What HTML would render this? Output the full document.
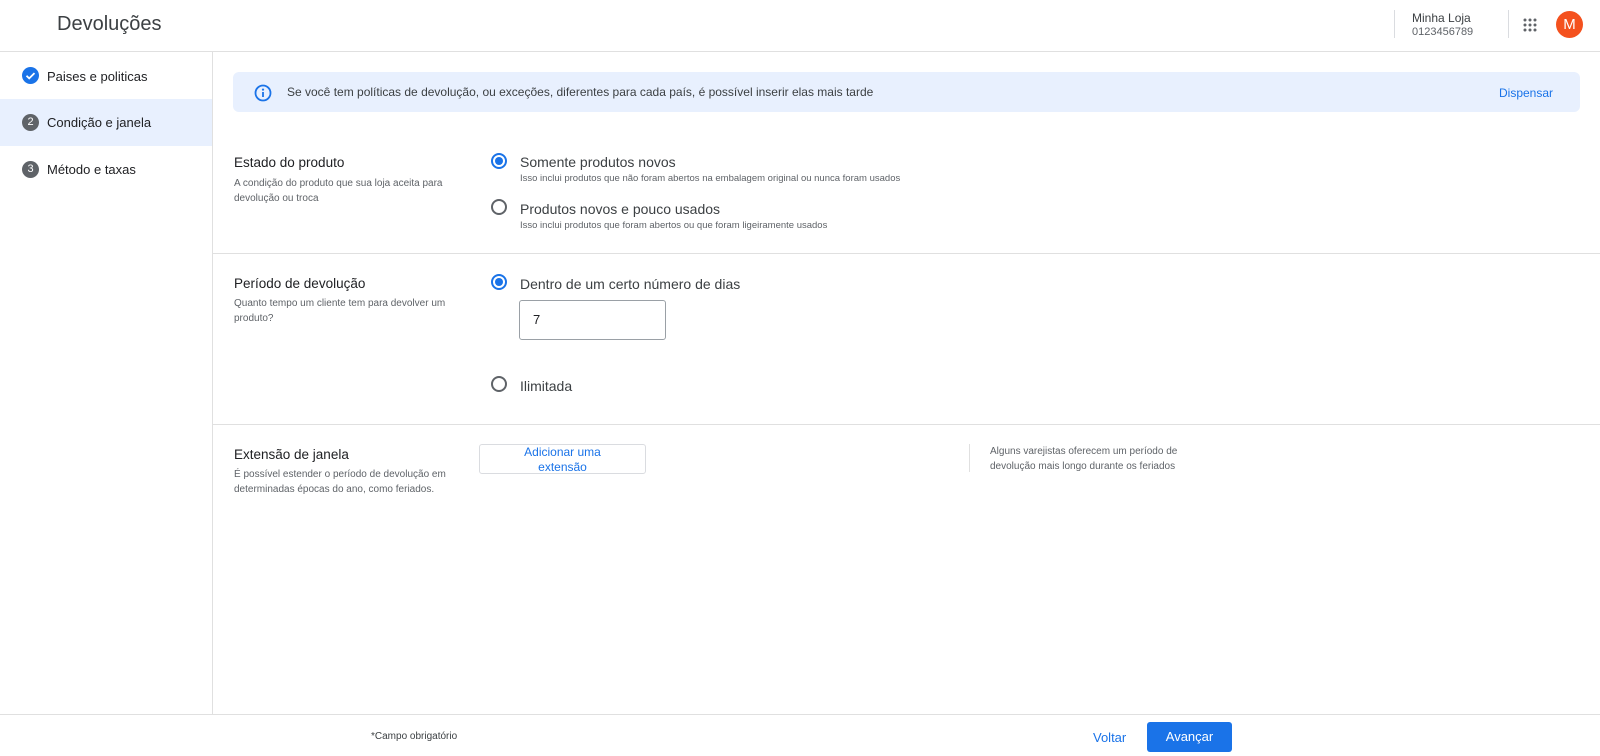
<!DOCTYPE html><html><head><meta charset="utf-8"><style>
*{box-sizing:border-box;margin:0;padding:0}
body{width:1600px;height:756px;position:relative;font-family:"Liberation Sans",sans-serif;color:#202124;background:#fff;overflow:hidden}
.a{position:absolute}
.h{font-size:14px;color:#202124}
.s{font-size:10px;color:#5f6368;line-height:15px}
.radio{position:absolute;width:16px;height:16px;border:2px solid #5f6368;border-radius:50%}
.radio.on{border-color:#1a73e8}
.radio.on::after{content:"";position:absolute;left:2px;top:2px;width:8px;height:8px;border-radius:50%;background:#1a73e8}
</style></head><body>
<div class="a" style="left:57px;top:13px;font-size:20px;color:#3c4043">Devoluções</div>
<div class="a" style="left:1394px;top:10px;width:1px;height:28px;background:#dadce0"></div>
<div class="a" style="left:1412px;top:11px;font-size:12px;color:#3c4043">Minha Loja</div>
<div class="a" style="left:1412px;top:26px;font-size:11px;color:#5f6368">0123456789</div>
<div class="a" style="left:1508px;top:10px;width:1px;height:28px;background:#dadce0"></div>
<svg class="a" style="left:1523px;top:18px" width="14" height="14"><g fill="#5f6368"><circle cx="2" cy="2" r="1.5"/><circle cx="7" cy="2" r="1.5"/><circle cx="12" cy="2" r="1.5"/><circle cx="2" cy="7" r="1.5"/><circle cx="7" cy="7" r="1.5"/><circle cx="12" cy="7" r="1.5"/><circle cx="2" cy="12" r="1.5"/><circle cx="7" cy="12" r="1.5"/><circle cx="12" cy="12" r="1.5"/></g></svg>
<div class="a" style="left:1556px;top:11px;width:27px;height:27px;border-radius:50%;background:#f4511e;color:#fff;font-size:15px;text-align:center;line-height:27px">M</div>
<div class="a" style="left:0;top:51px;width:1600px;height:1px;background:#e0e0e0"></div>
<div class="a" style="left:212px;top:52px;width:1px;height:662px;background:#e0e0e0"></div>
<div class="a" style="left:0;top:99px;width:212px;height:47px;background:#e8f0fe"></div>
<svg class="a" style="left:22px;top:67px" width="17" height="17"><circle cx="8.5" cy="8.5" r="8.5" fill="#1a73e8"/><path d="M4.5 8.7l2.7 2.7 5.3-5.3" stroke="#fff" stroke-width="1.8" fill="none"/></svg>
<div class="a" style="left:47px;top:69px;font-size:13px">Paises e politicas</div>
<div class="a" style="left:22px;top:114px;width:17px;height:17px;border-radius:50%;background:#5f6368;color:#fff;font-size:11px;text-align:center;line-height:17px">2</div>
<div class="a" style="left:47px;top:115px;font-size:13px">Condição e janela</div>
<div class="a" style="left:22px;top:161px;width:17px;height:17px;border-radius:50%;background:#5f6368;color:#fff;font-size:11px;text-align:center;line-height:17px">3</div>
<div class="a" style="left:47px;top:162px;font-size:13px">Método e taxas</div>
<div class="a" style="left:233px;top:72px;width:1347px;height:40px;background:#e8f0fe;border-radius:6px"></div>
<svg class="a" style="left:254px;top:84px" width="18" height="18"><circle cx="9" cy="9" r="7.5" stroke="#1a73e8" stroke-width="1.8" fill="none"/><rect x="8.1" y="8" width="1.8" height="5" fill="#1a73e8"/><circle cx="9" cy="5.6" r="1.1" fill="#1a73e8"/></svg>
<div class="a" style="left:287px;top:85px;font-size:12px;color:#3c4043">Se você tem políticas de devolução, ou exceções, diferentes para cada país, é possível inserir elas mais tarde</div>
<div class="a" style="left:1499px;top:86px;font-size:12px;color:#1a73e8">Dispensar</div>
<div class="a h" style="left:234px;top:155px;font-size:13.5px">Estado do produto</div>
<div class="a s" style="left:234px;top:176px">A condição do produto que sua loja aceita para<br>devolução ou troca</div>
<div class="radio on" style="left:491px;top:153px"></div>
<div class="a h" style="left:520px;top:154px;color:#3c4043">Somente produtos novos</div>
<div class="a s" style="left:520px;top:171px;font-size:9.5px">Isso inclui produtos que não foram abertos na embalagem original ou nunca foram usados</div>
<div class="radio" style="left:491px;top:199px"></div>
<div class="a h" style="left:520px;top:201px;color:#3c4043">Produtos novos e pouco usados</div>
<div class="a s" style="left:520px;top:218px;font-size:9.5px">Isso inclui produtos que foram abertos ou que foram ligeiramente usados</div>
<div class="a" style="left:213px;top:253px;width:1387px;height:1px;background:#e0e0e0"></div>
<div class="a h" style="left:234px;top:276px;font-size:13.5px">Período de devolução</div>
<div class="a s" style="left:234px;top:296px">Quanto tempo um cliente tem para devolver um<br>produto?</div>
<div class="radio on" style="left:491px;top:274px"></div>
<div class="a h" style="left:520px;top:276px;color:#3c4043">Dentro de um certo número de dias</div>
<div class="a" style="left:519px;top:300px;width:147px;height:40px;border:1px solid #9aa0a6;border-radius:3px;font-size:13px;padding:11px 13px">7</div>
<div class="radio" style="left:491px;top:376px"></div>
<div class="a h" style="left:520px;top:378px;color:#3c4043">Ilimitada</div>
<div class="a" style="left:213px;top:424px;width:1387px;height:1px;background:#e0e0e0"></div>
<div class="a h" style="left:234px;top:447px;font-size:13.5px">Extensão de janela</div>
<div class="a s" style="left:234px;top:467px">É possível estender o período de devolução em<br>determinadas épocas do ano, como feriados.</div>
<div class="a" style="left:479px;top:444px;width:167px;height:30px;border:1px solid #dadce0;border-radius:3px;font-size:12px;color:#1a73e8;text-align:center;line-height:15px">Adicionar uma<br>extensão</div>
<div class="a" style="left:969px;top:444px;width:1px;height:28px;background:#e0e0e0"></div>
<div class="a s" style="left:990px;top:444px">Alguns varejistas oferecem um período de<br>devolução mais longo durante os feriados</div>
<div class="a" style="left:0;top:714px;width:1600px;height:1px;background:#e0e0e0"></div>
<div class="a" style="left:371px;top:731px;font-size:10px;color:#3c4043">*Campo obrigatório</div>
<div class="a" style="left:1093px;top:730px;font-size:13px;color:#1a73e8">Voltar</div>
<div class="a" style="left:1147px;top:722px;width:85px;height:30px;background:#1a73e8;border-radius:3px;color:#fff;font-size:13px;text-align:center;line-height:30px">Avançar</div>
</body></html>
